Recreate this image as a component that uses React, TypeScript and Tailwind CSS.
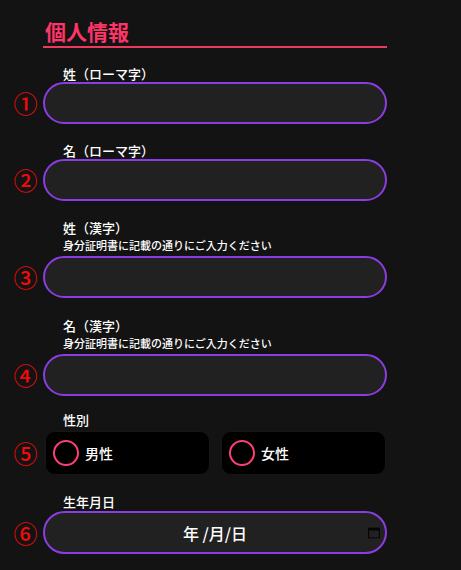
import React from "react";

const font = { fontFamily: '"Noto Sans CJK JP", "Noto Sans", sans-serif' };

function Num({ n }: { n: string }) {
  return (
    <div className="flex w-[43px] shrink-0 justify-center pl-[8px] text-[24px] font-medium leading-none text-[#f00a0a]">
      {n}
    </div>
  );
}

function Label({ text, sub }: { text: string; sub?: string }) {
  return (
    <div className="pl-5 text-white">
      <div className="text-[13px] font-medium leading-[17px]">{text}</div>
      {sub && <div className="mt-[2px] text-[11px] font-medium leading-[14px]">{sub}</div>}
    </div>
  );
}

function TextField({
  n,
  label,
  sub,
  className,
  gap,
}: {
  n: string;
  label: string;
  sub?: string;
  className: string;
  gap: string;
}) {
  return (
    <div className={className}>
      <div className="ml-[43px]">
        <Label text={label} sub={sub} />
      </div>
      <div className={`flex items-center ${gap}`}>
        <Num n={n} />
        <input
          type="text"
          className="h-[42px] w-[344px] rounded-full border-2 border-[#8a3de0] bg-[#212121] px-5 text-white outline-none"
        />
      </div>
    </div>
  );
}

function Radio({ text }: { text: string }) {
  return (
    <label className="flex h-[44px] flex-1 items-center gap-[6px] rounded-[10px] border border-[#161616] bg-black pl-[7px]">
      <span className="h-[26px] w-[26px] rounded-full border-2 border-[#ff3d77]" />
      <span className="text-[14px] font-medium text-white">{text}</span>
    </label>
  );
}

export default function App() {
  return (
    <div className="min-h-[570px] w-[461px] bg-[#131313]" style={font}>
      <div className="w-[387px] pb-4">
        <div className="ml-[43px] border-b-2 border-[#ea3a60] pb-[3px] pt-[19px]">
          <h2 className="pl-[2px] text-[21px] font-bold leading-[24px] text-[#ff3469]">
            個人情報
          </h2>
        </div>

        <TextField n="①" label="姓（ローマ字）" className="mt-[17px]" gap="mt-0" />
        <TextField n="②" label="名（ローマ字）" className="mt-[18px]" gap="mt-0" />
        <TextField
          n="③"
          label="姓（漢字）"
          sub="身分証明書に記載の通りにご入力ください"
          className="mt-[18px]"
          gap="mt-[4px]"
        />
        <TextField
          n="④"
          label="名（漢字）"
          sub="身分証明書に記載の通りにご入力ください"
          className="mt-[19px]"
          gap="mt-[4px]"
        />

        <div className="mt-[15px]">
          <div className="ml-[43px]">
            <Label text="性別" />
          </div>
          <div className="mt-[3px] flex items-center">
            <Num n="⑤" />
            <div className="flex w-[344px] gap-[11px] pl-[2px] pr-[1px]">
              <Radio text="男性" />
              <Radio text="女性" />
            </div>
          </div>
        </div>

        <div className="mt-[18px]">
          <div className="ml-[43px]">
            <Label text="生年月日" />
          </div>
          <div className="mt-[1px] flex items-center">
            <Num n="⑥" />
            <div className="relative flex h-[43px] w-[344px] items-center justify-center rounded-full border-2 border-[#8a3de0] bg-[#212121]">
              <span className="text-[16px] font-medium text-white">年 /月/日</span>
              <svg
                className="absolute right-[5px] top-1/2 -translate-y-1/2"
                width="12"
                height="11"
                viewBox="0 0 12 11"
              >
                <rect x="0.5" y="0.5" width="11" height="10" fill="none" stroke="#050505" strokeWidth="1.2" />
                <rect x="0.5" y="0.5" width="11" height="2.5" fill="#050505" />
              </svg>
            </div>
          </div>
        </div>
      </div>
    </div>
  );
}
